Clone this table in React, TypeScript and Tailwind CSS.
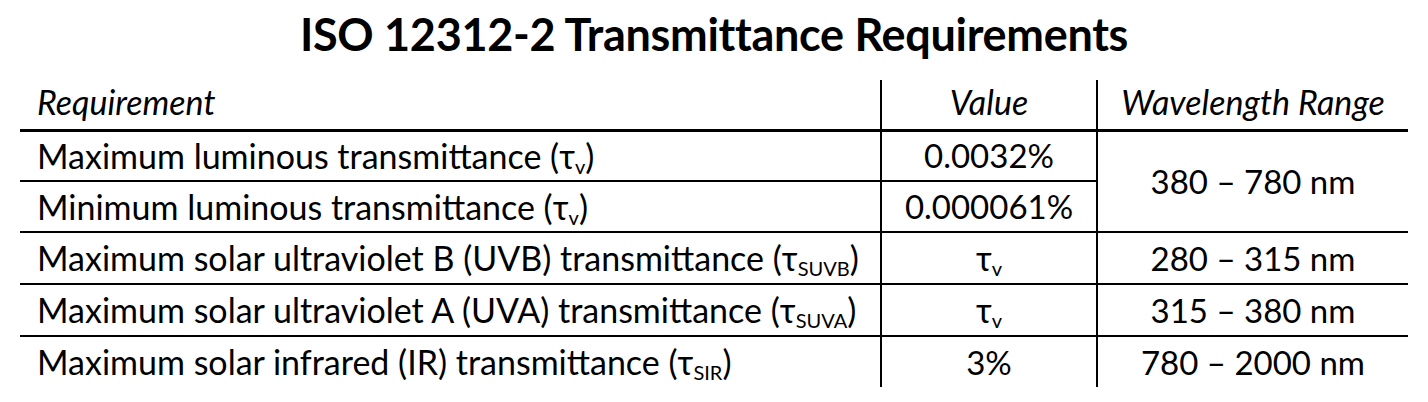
import React from "react";

const Tau = ({ sub }: { sub: string }) => (
  <span>
    τ<span className="text-[20px] relative top-[5px]">{sub}</span>
  </span>
);

export default function App() {
  const font = { fontFamily: "Lato, 'Open Sans', sans-serif" };
  return (
    <div className="w-[1428px] h-[402px] bg-white text-black" style={font}>
      <div className="h-[80px] flex items-start justify-center pt-[6px]">
        <h1 className="text-[45px] font-bold leading-[56px] tracking-[-0.3px]">ISO 12312-2 Transmittance Requirements</h1>
      </div>
      <table className="ml-[20px] w-[1388px] border-collapse text-[34px] leading-none table-fixed">
        <colgroup>
          <col className="w-[861px]" />
          <col className="w-[216px]" />
          <col className="w-[311px]" />
        </colgroup>
        <thead>
          <tr className="h-[50px] border-b-[3px] border-black text-[34px]">
            <th className="italic font-normal text-left pl-[17px] pb-[4px] border-r-2 border-black">Requirement</th>
            <th className="italic font-normal text-center pb-[4px] border-r-2 border-black">Value</th>
            <th className="italic font-normal text-center pb-[4px]">Wavelength Range</th>
          </tr>
        </thead>
        <tbody className="text-[34px]">
          <tr className="h-[51px] border-b-2 border-black">
            <td className="pl-[17px] border-r-2 border-black">Maximum luminous transmittance (<Tau sub="v" />)</td>
            <td className="text-center border-r-2 border-black text-[33px]">0.0032%</td>
            <td className="text-center text-[33px]" rowSpan={2}>380 – 780 nm</td>
          </tr>
          <tr className="h-[51px] border-b-2 border-black">
            <td className="pl-[17px] border-r-2 border-black">Minimum luminous transmittance (<Tau sub="v" />)</td>
            <td className="text-center border-r-2 border-black text-[33px]">0.000061%</td>
          </tr>
          <tr className="h-[52px] border-b-2 border-black">
            <td className="pl-[17px] border-r-2 border-black">Maximum solar ultraviolet B (UVB) transmittance (<Tau sub="SUVB" />)</td>
            <td className="text-center border-r-2 border-black"><Tau sub="v" /></td>
            <td className="text-center text-[33px]">280 – 315 nm</td>
          </tr>
          <tr className="h-[52px] border-b-2 border-black">
            <td className="pl-[17px] border-r-2 border-black">Maximum solar ultraviolet A (UVA) transmittance (<Tau sub="SUVA" />)</td>
            <td className="text-center border-r-2 border-black"><Tau sub="v" /></td>
            <td className="text-center text-[33px]">315 – 380 nm</td>
          </tr>
          <tr className="h-[51px]">
            <td className="pl-[17px] border-r-2 border-black">Maximum solar infrared (IR) transmittance (<Tau sub="SIR" />)</td>
            <td className="text-center border-r-2 border-black text-[33px]">3%</td>
            <td className="text-center text-[33px]">780 – 2000 nm</td>
          </tr>
        </tbody>
      </table>
    </div>
  );
}
